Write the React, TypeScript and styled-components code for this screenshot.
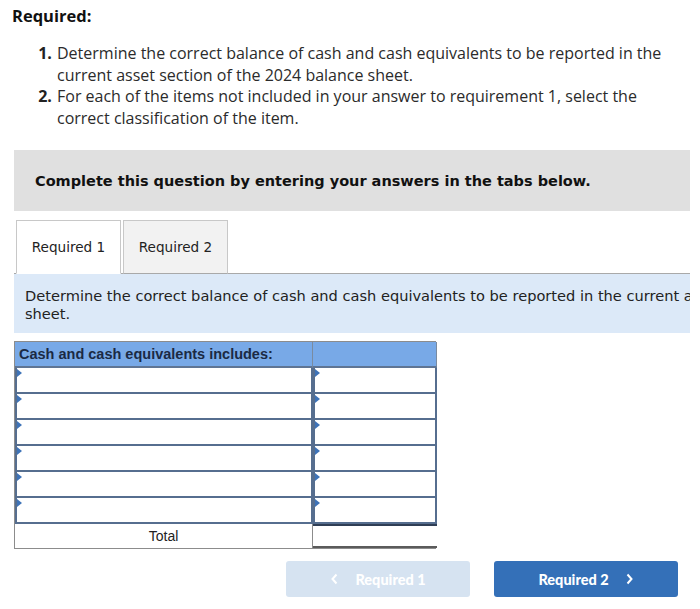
import React, { useState } from "react";
import styled, { createGlobalStyle } from "styled-components";

const GlobalStyle = createGlobalStyle`
  html, body {
    margin: 0;
    padding: 0;
    background: #ffffff;
    overflow: hidden;
  }
`;

const Page = styled.div`
  width: 700px;
  height: 609px;
  padding: 5px 10px 0 14px;
  box-sizing: border-box;
  color: #222;
`;

const Heading = styled.h2`
  margin: 0 0 0 -2px;
  font-family: "Open Sans", "Lato", sans-serif;
  font-weight: 700;
  font-size: 16.5px;
  line-height: 22px;
  color: #111;
`;

const ReqList = styled.ol`
  margin: 16px 0 0 0;
  width: 658px;
  padding: 0 0 0 42px;
  box-sizing: border-box;
  font-family: "Open Sans", "Lato", sans-serif;
  font-size: 16px;
  line-height: 21.6px;
  color: #2b2b2b;

  li {
    padding-left: 1px;
  }
  li::marker {
    font-weight: 700;
    color: #222;
  }
`;

const Banner = styled.div`
  margin-top: 21px;
  height: 61px;
  background: #e0e0e0;
  display: flex;
  align-items: center;
  padding-left: 21px;
  font-family: "DejaVu Sans", Verdana, sans-serif;
  font-weight: 700;
  font-size: 14.5px;
  color: #111;
`;

const TabBar = styled.div`
  margin-top: 9px;
  display: flex;
  gap: 2px;
  padding-left: 2px;
  border-bottom: 1px solid #a9a9a9;
`;

const Tab = styled.button<{ $active?: boolean }>`
  width: 105px;
  height: 54px;
  margin-bottom: -1px;
  border: 1px solid #c8c8c8;
  border-bottom: ${(p) => (p.$active ? "1px solid #fff" : "1px solid #a9a9a9")};
  background: ${(p) => (p.$active ? "#ffffff" : "#f2f2f2")};
  font-family: "DejaVu Sans", Verdana, sans-serif;
  font-size: 13.6px;
  color: #222;
  padding: 0;
  cursor: pointer;
`;

const Instruction = styled.div`
  height: 59px;
  background: #dce9f8;
  overflow: hidden;
  padding: 13px 0 0 11px;
  box-sizing: border-box;
`;

const InstructionText = styled.p`
  margin: 0;
  width: 920px;
  font-family: "DejaVu Sans", Verdana, sans-serif;
  font-size: 14.6px;
  line-height: 18px;
  color: #222;
`;

const Table = styled.div`
  margin-top: 8px;
  width: 422px;
  display: grid;
  grid-template-columns: 298px 124px;
  border: 1px solid #8c8c8c;
  box-sizing: border-box;
`;

const HeadCell = styled.div`
  height: 24px;
  background: #78a9e7;
  border-right: 1px solid #7a8ba0;
  border-bottom: 2px solid #5f7594;
  display: flex;
  align-items: center;
  padding-left: 4px;
  font-family: "Liberation Sans", Arial, sans-serif;
  font-weight: 700;
  font-size: 14.5px;
  color: #1b2a44;
  &:last-child {
    border-right: none;
  }
`;

const InputCell = styled.div`
  position: relative;
  height: 24px;
  border: 2px solid #566e8f;
  border-top: none;
  background: #ffffff;
  &::before {
    content: "";
    position: absolute;
    left: 0;
    top: 1px;
    border-top: 4px solid transparent;
    border-bottom: 4px solid transparent;
    border-left: 5px solid #3e73b8;
  }
`;

const TotalLabel = styled.div`
  height: 24px;
  display: flex;
  align-items: center;
  justify-content: center;
  font-family: "Liberation Sans", Arial, sans-serif;
  font-size: 14px;
  color: #222;
  border-right: 1px solid #8c8c8c;
`;

const TotalCell = styled.div`
  height: 20px;
  border-top: 2px solid #2f3e55;
  border-bottom: 2px solid #5b5b5b;
  background: #fff;
`;

const Nav = styled.div`
  margin-top: 12px;
  display: flex;
  gap: 24px;
  padding-left: 272px;
`;

const NavButton = styled.button<{ $disabled?: boolean }>`
  width: 184px;
  height: 36px;
  border: none;
  border-radius: 3px;
  background: ${(p) => (p.$disabled ? "#d6e3f1" : "#3470b8")};
  color: #ffffff;
  font-family: "Lato", "Open Sans", sans-serif;
  font-weight: 900;
  font-size: 14.5px;
  display: flex;
  align-items: center;
  justify-content: center;
  gap: 16px;
  cursor: ${(p) => (p.$disabled ? "default" : "pointer")};
`;

const Chevron = styled.svg`
  width: 9px;
  height: 12px;
`;

const ChevronLeft = () => (
  <Chevron viewBox="0 0 9 12">
    <path d="M6.5 1.5 L2.5 6 L6.5 10.5" fill="none" stroke="#fff" strokeWidth="2" />
  </Chevron>
);

const ChevronRight = () => (
  <Chevron viewBox="0 0 9 12">
    <path d="M2.5 1.5 L6.5 6 L2.5 10.5" fill="none" stroke="#fff" strokeWidth="2" />
  </Chevron>
);

const App: React.FC = () => {
  const [tab, setTab] = useState(1);
  const rows = [0, 1, 2, 3, 4, 5];

  return (
    <Page>
      <GlobalStyle />
      <Heading>Required:</Heading>
      <ReqList>
        <li>
          Determine the correct balance of cash and cash equivalents to be reported in the
          current asset section of the 2024 balance sheet.
        </li>
        <li>
          For each of the items not included in your answer to requirement 1, select the
          correct classification of the item.
        </li>
      </ReqList>

      <Banner>Complete this question by entering your answers in the tabs below.</Banner>

      <TabBar>
        <Tab $active={tab === 1} onClick={() => setTab(1)}>
          Required 1
        </Tab>
        <Tab $active={tab === 2} onClick={() => setTab(2)}>
          Required 2
        </Tab>
      </TabBar>
      <Instruction>
        <InstructionText>
          Determine the correct balance of cash and cash equivalents to be reported in the
          current asset section of the 2024 balance sheet.
        </InstructionText>
      </Instruction>

      <Table>
        <HeadCell>Cash and cash equivalents includes:</HeadCell>
        <HeadCell />
        {rows.map((r) => (
          <React.Fragment key={r}>
            <InputCell />
            <InputCell />
          </React.Fragment>
        ))}
        <TotalLabel>Total</TotalLabel>
        <TotalCell />
      </Table>

      <Nav>
        <NavButton $disabled>
          <ChevronLeft />
          Required 1
        </NavButton>
        <NavButton>
          Required 2
          <ChevronRight />
        </NavButton>
      </Nav>
    </Page>
  );
};

export default App;
